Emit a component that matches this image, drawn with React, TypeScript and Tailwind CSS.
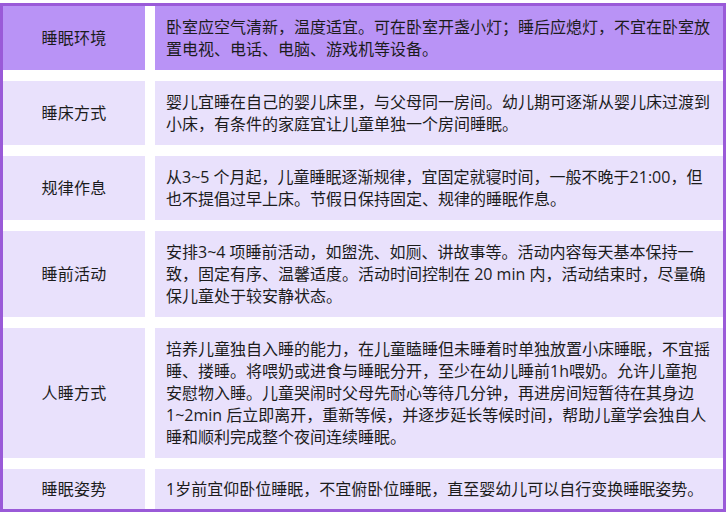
import React from "react";

type Row = { title: string; lines: string[]; head?: boolean };

const rows: Row[] = [
  {
    title: "睡眠环境",
    head: true,
    lines: [
      "卧室应空气清新，温度适宜。可在卧室开盏小灯；睡后应熄灯，不宜在卧室放",
      "置电视、电话、电脑、游戏机等设备。",
    ],
  },
  {
    title: "睡床方式",
    lines: [
      "婴儿宜睡在自己的婴儿床里，与父母同一房间。幼儿期可逐渐从婴儿床过渡到",
      "小床，有条件的家庭宜让儿童单独一个房间睡眠。",
    ],
  },
  {
    title: "规律作息",
    lines: [
      "从3~5 个月起，儿童睡眠逐渐规律，宜固定就寝时间，一般不晚于21:00，但",
      "也不提倡过早上床。节假日保持固定、规律的睡眠作息。",
    ],
  },
  {
    title: "睡前活动",
    lines: [
      "安排3~4 项睡前活动，如盥洗、如厕、讲故事等。活动内容每天基本保持一",
      "致，固定有序、温馨适度。活动时间控制在 20 min 内，活动结束时，尽量确",
      "保儿童处于较安静状态。",
    ],
  },
  {
    title: "人睡方式",
    lines: [
      "培养儿童独自入睡的能力，在儿童瞌睡但未睡着时单独放置小床睡眠，不宜摇",
      "睡、搂睡。将喂奶或进食与睡眠分开，至少在幼儿睡前1h喂奶。允许儿童抱",
      "安慰物入睡。儿童哭闹时父母先耐心等待几分钟，再进房间短暂待在其身边",
      "1~2min 后立即离开，重新等候，并逐步延长等候时间，帮助儿童学会独自人",
      "睡和顺利完成整个夜间连续睡眠。",
    ],
  },
  {
    title: "睡眠姿势",
    lines: ["1岁前宜仰卧位睡眠，不宜俯卧位睡眠，直至婴幼儿可以自行变换睡眠姿势。"],
  },
];

export default function App() {
  return (
    <div
      className="w-[726px] h-[514px] bg-white pt-[3px] text-[#1c1c1c]"
      style={{ fontFamily: '"Open Sans", "Noto Sans CJK SC", sans-serif' }}
    >
      <div className="border-[3px] border-[#9a5ad8] grid grid-cols-[142px_1fr] gap-x-[10px] gap-y-[11px] bg-white">
        {rows.map((r, i) => (
          <React.Fragment key={i}>
            <div
              className={`flex items-center justify-center text-[16px] tracking-[0.2px] ${
                r.head ? "bg-[#b993f6]" : "bg-[#e9e1fc]"
              }`}
            >
              {r.title}
            </div>
            <div
              className={`pl-[11px] pr-2 text-[16px] leading-[22px] whitespace-nowrap ${
                r.lines.length === 1 ? "py-[9px]" : "py-[10px]"
              } ${r.head ? "bg-[#b993f6]" : "bg-[#e9e1fc]"}`}
            >
              {r.lines.map((l, j) => (
                <div key={j}>{l}</div>
              ))}
            </div>
          </React.Fragment>
        ))}
      </div>
    </div>
  );
}
